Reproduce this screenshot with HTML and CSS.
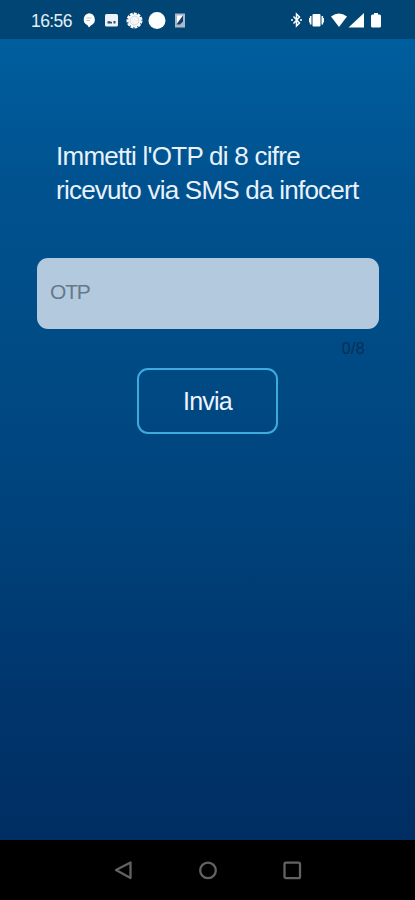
FILE: index.html
```html
<!DOCTYPE html>
<html lang="it">
<head>
<meta charset="utf-8">
<meta name="viewport" content="width=device-width, initial-scale=1">
<title>OTP</title>
<link rel="stylesheet" href="styles.css">
</head>
<body>
<div class="screen">
  <header class="status">
    <span class="clock">16:56</span>
    <svg class="status-icons" width="106" height="20" viewBox="0 0 106 20" fill="#fff">
      <path d="M7 3.300a6.500 6.300 0 0 1 1.800 12.100L7 17.500l-1.500-2.300A6.500 6.300 0 0 1 7 3.300z"/>
      <path d="M4.500 8h5M4.500 10.500h3.500" stroke="#b4c3d2" stroke-width="1.200"/>
      <rect x="23" y="4" width="13" height="12.500" rx="1.500" fill="#edf2f7"/>
      <path d="M25.500 13.500v-2l2-.5 1.500 1 1-.5v2zM31.500 13.500v-2.500h2v2.500z" fill="#244f7b"/>
      <circle cx="52.500" cy="10.500" r="7" fill="none" stroke="#fff" stroke-width="2" stroke-dasharray="3 1"/>
      <circle cx="52.500" cy="10.500" r="6.500"/>
      <circle cx="52.500" cy="10.500" r="4.500" fill="#f3f5f7" stroke="#ccd5dd"/>
      <circle cx="75" cy="10.500" r="8.500"/>
      <rect x="93" y="3.500" width="10" height="14" fill="#a9bbca"/>
      <path d="M95 5.500h6l-6 8z" fill="#fff"/>
      <path d="M101 5.500v6l-3 3h-3.500z" fill="#163e68"/>
    </svg>
    <svg class="system-icons" width="96" height="20" viewBox="0 0 96 20" fill="#fff">
      <path d="M3.500 6.500l6 6.500-3 3V4l3 3-6 6.500" fill="none" stroke="#fff" stroke-width="1.500"/>
      <path d="M1 10h2M10 10h2" stroke="#fff" stroke-width="1.700"/>
      <rect x="22.500" y="4" width="8" height="12.500" rx="1"/>
      <path d="M20.700 6v8.500M32.300 6v8.500" stroke="#fff" stroke-width="1.600"/>
      <path d="M19.500 8v4.500M33.500 8v4.500" stroke="#fff"/>
      <path d="M41 6.500Q49 .5 57 6.500L49 17z"/>
      <path d="M74 3v14.500H58.500z"/>
      <path d="M82.500 4.500H84V3h4v1.500h1.500q1.500 0 1.500 1.500v10q0 1.500-1.500 1.500h-7q-1.500 0-1.500-1.500V6q0-1.500 1.500-1.500z"/>
    </svg>
  </header>
  <main class="content">
    <h1 class="title"><span class="line-one">Immetti l'OTP di 8 cifre</span><br><span class="line-two">ricevuto via SMS da infocert</span></h1>
    <div class="field"><span class="placeholder">OTP</span></div>
    <div class="counter">0/8</div>
    <button class="submit" type="button">Invia</button>
  </main>
  <nav class="navbar">
    <svg width="20" height="20" viewBox="0 0 20 20"><path d="M2 10L16.500 2.500v15.500z"/></svg>
    <svg width="20" height="20" viewBox="0 0 20 20"><circle cx="10" cy="10.400" r="7.800"/></svg>
    <svg width="20" height="20" viewBox="0 0 20 20"><rect x="2.500" y="2.700" width="15.500" height="15.500" rx="1.500"/></svg>
  </nav>
</div>
</body>
</html>
```
FILE: styles.css
```css
* { box-sizing: border-box; }
body { margin: 0; font-family: "Liberation Sans", Arial, sans-serif; }
.screen { width: 415px; height: 900px; display: flex; flex-direction: column; background: #000; }
.status {
  height: 39px;
  padding: 0 29px 0 31px;
  display: flex;
  align-items: center;
  background: #004573;
  color: #e6edf5;
}
.clock { width: 51px; font-size: 17.5px; letter-spacing: -0.6px; line-height: 20px; padding-top: 2px; }
.system-icons { margin-left: auto; }
.content {
  height: 801px;
  padding: 101px 37px 0;
  display: flex;
  flex-direction: column;
  background: linear-gradient(#005e9e 0%, #00528f 18%, #004a84 42%, #00417a 62%, #00356c 82%, #002e62 100%);
}
.title { margin: 0 0 0 19px; height: 118px; font-size: 26px; font-weight: 400; line-height: 33.5px; color: #e9f1fb; white-space: nowrap; }
.line-one { letter-spacing: -0.74px; }
.line-two { letter-spacing: -0.76px; }
.field {
  height: 71px;
  width: 342px;
  padding: 0 13px 3px;
  display: flex;
  align-items: center;
  border-radius: 11px;
  background: #b3c9dd;
}
.placeholder { font-size: 21px; letter-spacing: -1.2px; color: #66798b; }
.counter { height: 39px; padding: 11px 13px 0 0; text-align: right; font-size: 16px; letter-spacing: 0.3px; line-height: 18px; color: #062f55; }
.submit {
  width: 141px;
  height: 66px;
  margin: 0 0 0 100px;
  padding: 0;
  border: 2px solid #3daae0;
  border-radius: 11px;
  background: transparent;
  color: #eef4ff;
  font: 400 25px "Liberation Sans", Arial, sans-serif;
  letter-spacing: -0.8px;
}
.navbar { height: 60px; display: flex; justify-content: center; align-items: center; gap: 64px; background: #000; }
.navbar svg { fill: none; stroke: #626262; stroke-width: 2.3; stroke-linejoin: round; }
```
